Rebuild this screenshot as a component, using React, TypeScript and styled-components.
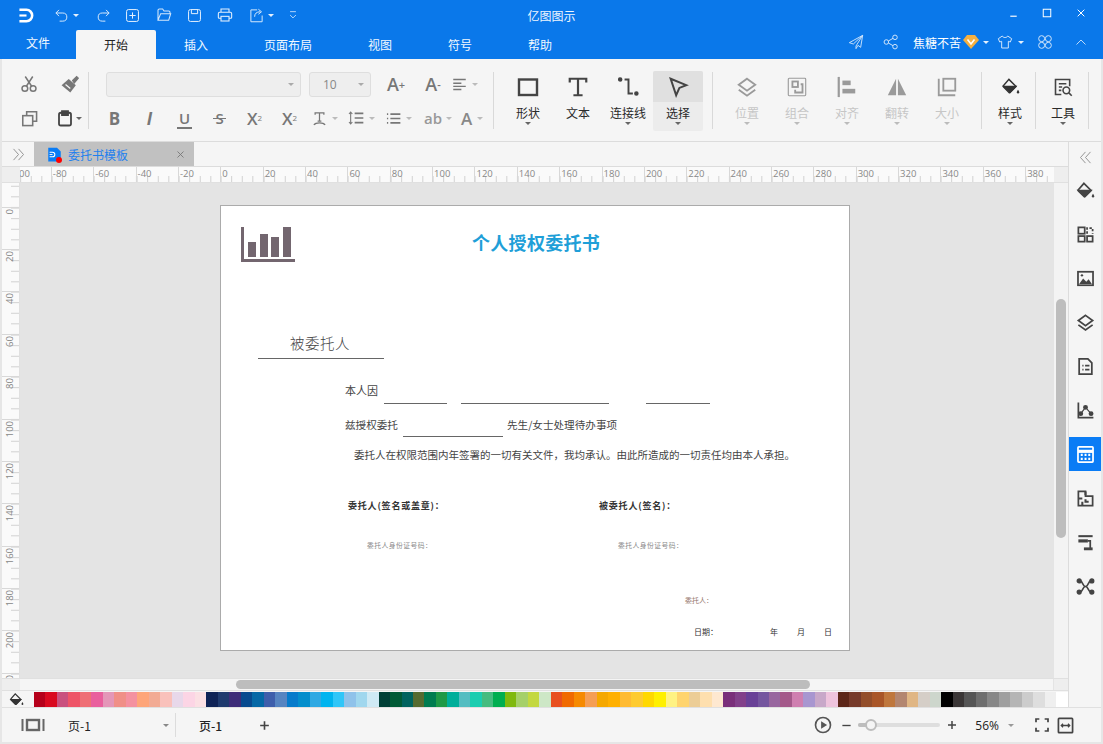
import React from 'react';
import styled, { createGlobalStyle } from 'styled-components';

const Global = createGlobalStyle`
  html, body { margin: 0; padding: 0; background: #e6e6e6; }
  body { font-family: "Noto Sans CJK SC", "Open Sans", sans-serif; overflow: hidden; }
  * { box-sizing: border-box; }
`;

const BLUE = '#0a78ea';
const PALETTE = ['#b5001a','#d9091f','#c9507e','#ee5467','#ef6f75','#e95f9d','#e496b8','#f08f87','#f491a0','#fea579','#f2ab94','#f9c1bb','#e8d8ea','#fcd5e5','#fbe0e4','#0f2356','#1f3a6e','#3d2c78','#074a8f','#0568a6','#3e5eab','#5684c1','#067bcb','#038ecc','#2fa9e3','#00b4ef','#30c6f8','#8fc2ea','#a0d7ee','#cfeaf5','#003f37','#005a36','#00635f','#566b30','#007c50','#1f9946','#00ae9a','#54bdc1','#1bcdb0','#45bc7f','#00ae50','#80b90e','#a5d069','#c3d840','#cde7c6','#e8501f','#f06a00','#f68a00','#f59e54','#f5a800','#ffb000','#ffbb33','#fecb30','#ffd800','#fff000','#fff283','#ffd46e','#eccd96','#fedfae','#fee8d0','#7a2f7a','#82408a','#694197','#75569f','#98669f','#a4598a','#cf7fb0','#a896d0','#c8a8c9','#eec4dd','#5c2618','#763a2a','#934e2a','#a95628','#bf773d','#b38670','#e0b684','#d5cec7','#cdd6cc','#000000','#3a3636','#555555','#6e6e6e','#878787','#9f9f9f','#b5b5b5','#cccccc','#dedede','#efefef','#ffffff'];

const Svg = styled.svg<{ $c: string }>`
  display: block;
  flex-shrink: 0;
  color: ${p => p.$c};
`;

const paths: Record<string, React.ReactNode> = {
  logo: <><path d="M2 4h10a8 8 0 0 1 0 16H2" strokeWidth="3.6" /><path d="M2 12h10" strokeWidth="3" /></>,
  undo: <path d="M8 3L3 8l5 5M3 8h11a6 6 0 0 1 0 13h-5" />,
  redo: <path d="M16 3l5 5-5 5M21 8H10a6 6 0 0 0 0 13h5" />,
  add: <><rect x="2.5" y="2.5" width="19" height="19" rx="3" /><path d="M12 7v10M7 12h10" /></>,
  open: <path d="M3 20V5a2 2 0 0 1 2-2h5l2 3h7a2 2 0 0 1 2 2v2M3 20h16l3-10H7l-4 10z" />,
  save: <><rect x="2.5" y="2.5" width="19" height="19" rx="3" /><path d="M7 3v6h10V3" /></>,
  print: <><path d="M6 8V3h12v5M6 17H3a1.5 1.5 0 0 1-1-1.5V10a2 2 0 0 1 2-2h16a2 2 0 0 1 2 2v5.500a1.500 1.500 0 0 1-1 1.500h-3" /><rect x="6" y="14" width="12" height="7" /></>,
  exportI: <><path d="M13 3H3v19h18V12" /><path d="M9 14c0-5 3-8 9-8M15 2l5 4-5 4" /></>,
  more: <path d="M5 4h14M5 12l7 7 7-7" />,
  minus: <path d="M5 18h14" strokeWidth="3" />,
  square: <rect x="3" y="3" width="18" height="18" strokeWidth="2.400" />,
  bigSquare: <rect x="3" y="4.500" width="18" height="15.500" strokeWidth="2.400" />,
  close: <path d="M4 4l16 16M20 4L4 20" strokeWidth="2.400" />,
  send: <path d="M22 2L2 13l6 2 14-13-10 16v4l3-5 4 3z" />,
  share: <><circle cx="5" cy="12" r="3.400" /><circle cx="18" cy="5" r="3.400" /><circle cx="18" cy="19" r="3.400" /><path d="M8 10.500l7-4M8 13.500l7 4" /></>,
  shirt: <path d="M8 3L2 7l2 5 3-1v10h10V11l3 1 2-5-6-4c-1 3-7 3-8 0z" />,
  apps: <><circle cx="7" cy="7" r="4.500" /><circle cx="17" cy="7" r="4.500" /><circle cx="7" cy="17" r="4.500" /><circle cx="17" cy="17" r="4.500" /></>,
  up: <path d="M3 17L12 8l9 9" />,
  cut: <><circle cx="6.500" cy="18" r="3.800" /><circle cx="17.500" cy="18" r="3.800" /><path d="M8.500 15L17 2M15.500 15L7 2" /></>,
  brush: <><path d="M16 7l5-5 2 2-5 6z" fill="currentColor" /><path d="M11 5l9 8-7 9L2 13z" fill="currentColor" stroke="none" /><path d="M7 12l6 5" stroke="#f5f5f5" /></>,
  copy: <><rect x="2.500" y="8" width="14" height="14" /><path d="M8 8V2.500h14V16h-5.500" /></>,
  paste: <><rect x="4" y="5" width="16" height="17" rx="2.500" /><path d="M8 8V3h8v5z" fill="currentColor" /></>,
  align: <path d="M2 4h20M2 10h13M2 15h20M2 20h13" />,
  lineH: <><path d="M10 5h13M10 12h13M10 19h13" strokeWidth="2.600" /><path d="M4 3v18M1.500 6L4 3l2.500 3M1.500 18L4 21l2.500-3" /></>,
  list: <><path d="M7 5h16M7 12h16M7 19h16" strokeWidth="2.600" /><path d="M1.500 5h2M1.500 12h2M1.500 19h2" strokeWidth="2.600" /></>,
  typo: <><path d="M5 6V3h14v3M12 3v13M9 16h6" /><path d="M3 22c3-4 15-4 18 0" /></>,
  bigT: <path d="M3 7V3h18v4M12 3v18M7 21h10" />,
  conn: <><circle cx="2.500" cy="4" r="1.500" fill="currentColor" /><circle cx="21" cy="20" r="1.500" fill="currentColor" /><path d="M7.500 4H12v16h5" /></>,
  select: <path d="M4 3l17 7-7.500 3L10 21z" />,
  layers: <><path d="M12 3l9 6.500-9 6.500-9-6.500z" /><path d="M3 15l9 6.500 9-6.500" /></>,
  group: <><rect x="2.500" y="2.500" width="19" height="19" rx="1" strokeWidth="1.200" /><rect x="7" y="6" width="6" height="6" /><path d="M16 9h2v9h-8v-3" /></>,
  alignL: <><path d="M3 1v22" strokeWidth="2.400" /><rect x="7" y="5" width="9" height="5" fill="currentColor" stroke="none" /><rect x="7" y="14" width="14" height="5" fill="currentColor" stroke="none" /></>,
  flip: <><path d="M11 3v18H2z" fill="currentColor" stroke="none" /><path d="M13 3v18h9z" fill="currentColor" stroke="none" /></>,
  size: <><path d="M3 3v18h18" /><rect x="8" y="3" width="13" height="13" /></>,
  bucket: <><path d="M10 3l9 9-7.500 7.500a1 1 0 0 1-1.400 0L3 12.400a1 1 0 0 1 0-1.400z" /><path d="M3.500 12h15L11.500 19z" fill="currentColor" /><path d="M21.500 16c1 1.500 1.500 2.400 1.500 3.200a1.500 1.500 0 0 1-3 0c0-.8.500-1.700 1.500-3.200z" fill="currentColor" stroke="none" /></>,
  tools: <><path d="M20 11V3H3v18h7" /><path d="M7 8h9M7 12h4M7 16h3" /><circle cx="16" cy="16" r="4" /><path d="M19 19l3.500 3.500" /></>,
  tiles: <><rect x="3" y="3" width="8" height="8" /><rect x="3" y="14" width="8" height="7" /><rect x="14" y="14" width="7" height="7" /><path d="M14 11V4h7v7" strokeDasharray="3 2" /></>,
  image: <><rect x="2.500" y="3.500" width="19" height="17" /><path d="M4 19l5-7 4 4 3-3 4 6z" fill="currentColor" stroke="none" /><circle cx="7.500" cy="8" r="1.500" fill="currentColor" stroke="none" /></>,
  doc: <><path d="M4 2.500h11l5 5V21.500H4z" /><path d="M8 11h1.500M11.500 11H17M8 16h1.500M11.500 16H17" /></>,
  chart: <><path d="M3 2v19h19" /><path d="M6 16l6-8 7 8" strokeWidth="1.500" /><circle cx="6" cy="16" r="2" fill="currentColor" /><circle cx="12" cy="8" r="2" fill="currentColor" /><circle cx="19" cy="16" r="2" fill="currentColor" /></>,
  calc: <><rect x="2.500" y="2.500" width="19" height="19" rx="1" /><path d="M2.500 8h19" strokeWidth="4" /><path d="M6 12.500h2.500M10.800 12.500h2.500M15.500 12.500h2.500M6 17.500h2.500M10.800 17.500h2.500M15.500 17.500h2.500" strokeWidth="2.600" /></>,
  puzzle: <><path d="M3 3h9v6h9v12H3z" /><path d="M3 12h5M12 3v5M12 13v3h4M8 16v5" strokeWidth="2.600" /></>,
  org: <><path d="M3 4h18" strokeWidth="2.600" /><path d="M3 10h12" strokeWidth="4" /><path d="M15 10h3v9" /><path d="M10 20h11" strokeWidth="3.600" /></>,
  net: <><path d="M5 5c4 0 3 7 7 7s3-7 7-7M5 19c4 0 3-7 7-7s3 7 7 7" /><circle cx="4" cy="5" r="2.200" fill="currentColor" /><circle cx="20" cy="5" r="2.200" fill="currentColor" /><circle cx="4" cy="19" r="2.200" fill="currentColor" /><circle cx="20" cy="19" r="2.200" fill="currentColor" /></>,
  dbl: <path d="M4 3l8 9-8 9M12 3l8 9-8 9" />,
  dblL: <path d="M12 3l-8 9 8 9M20 3l-8 9 8 9" />,
  pageView: <><path d="M1.500 6v12M22.500 6v12" strokeWidth="2" /><rect x="6" y="7" width="12" height="10" strokeWidth="2.400" /></>,
  plus: <path d="M12 4v16M4 12h16" strokeWidth="3" />,
  dash: <path d="M3 12h18" strokeWidth="3" />,
  play: <><circle cx="12" cy="12" r="10" /><path d="M9.500 7l8 5-8 5z" fill="currentColor" stroke="none" /></>,
  full: <path d="M3 8V3h5M16 3h5v5M21 16v5h-5M8 21H3v-5" strokeWidth="2.600" />,
  fit: <><rect x="2" y="2" width="20" height="20" rx="1" /><path d="M6 12h12M8.500 9.500L6 12l2.500 2.500M15.500 9.500L18 12l-2.500 2.500" strokeWidth="1.800" /></>,
  docTab: <path d="M2 1h14l6 6v16H2z" fill="currentColor" stroke="none" />,
};

function Icon({ n, s = 16, c = 'currentColor', w = 2 }: { n: string; s?: number; c?: string; w?: number }) {
  return (
    <Svg $c={c} width={s} height={s} viewBox="0 0 24 24" fill="none" stroke="currentColor" strokeWidth={w} strokeLinejoin="miter">
      {paths[n]}
    </Svg>
  );
}

const App0 = styled.div`
  width: 1103px;
  height: 744px;
  display: flex;
  flex-direction: column;
  overflow: hidden;
  background: #e6e6e6;
`;
const TitleBar = styled.div`
  height: 30px;
  background: ${BLUE};
  display: grid;
  grid-template-columns: 1fr auto 1fr;
  align-items: center;
  color: #fff;
`;
const Quick = styled.div`
  display: flex;
  align-items: center;
`;
const Slot = styled.span<{ $l?: number }>`
  display: inline-flex;
  align-items: center;
  flex-shrink: 0;
  margin-left: ${p => p.$l ?? 0}px;
`;
const AppTitle = styled.div`
  font-size: 12px;
  color: #eef6ff;
  padding-top: 1px;
`;
const WinBtns = styled.div`
  display: flex;
  justify-content: flex-end;
  padding: 0 5px 4px 0;
`;
const WinBtn = styled.span`
  width: 34px;
  height: 26px;
  display: flex;
  align-items: center;
  justify-content: center;
`;
const Caret = styled.span<{ $c?: string; $m?: number }>`
  display: inline-block;
  flex-shrink: 0;
  width: 0;
  height: 0;
  margin-left: ${p => p.$m ?? 0}px;
  border-left: 3px solid transparent;
  border-right: 3px solid transparent;
  border-top: 3px solid ${p => p.$c ?? '#bbb'};
`;
const MenuBar = styled.div`
  height: 29px;
  background: ${BLUE};
  display: flex;
  justify-content: space-between;
  align-items: flex-end;
  color: #fff;
`;
const Tabs = styled.div`
  display: flex;
  height: 100%;
`;
const MenuTab = styled.div<{ $active?: boolean; $first?: boolean }>`
  height: 29px;
  align-self: flex-end;
  padding: ${p => (p.$first ? '0 26px 4px' : '0 28px 1px')};
  display: flex;
  align-items: center;
  font-size: 12px;
  border-radius: 2px 2px 0 0;
  color: ${p => (p.$active ? '#222' : '#f2f8ff')};
  background: ${p => (p.$active ? '#f5f5f5' : 'transparent')};
`;
const MenuRight = styled.div`
  display: flex;
  align-items: center;
  height: 28px;
  padding-right: 16px;
  padding-bottom: 6px;
`;
const UserName = styled.span`
  font-size: 12px;
  color: #fff;
`;
const Shell = styled.div`
  flex: 1;
  min-height: 0;
  display: flex;
  flex-direction: column;
  padding: 0 2px 2px;
`;
const Ribbon = styled.div`
  height: 83px;
  background: #f5f5f5;
  border-bottom: 1px solid #dcdcdc;
  display: flex;
  align-items: flex-start;
  padding-top: 8px;
`;
const ClipGrid = styled.div`
  display: grid;
  grid-template-columns: 40px 40px;
  grid-auto-rows: 34px;
  padding-left: 7px;
  width: 86px;
`;
const Cell = styled.div<{ $w?: number; $start?: boolean }>`
  display: flex;
  align-items: center;
  justify-content: ${p => (p.$start ? 'flex-start' : 'center')};
  height: 34px;
  ${p => (p.$w ? `width: ${p.$w}px; flex-shrink: 0;` : '')}
`;
const RSep = styled.div<{ $l?: number; $r?: number }>`
  width: 1px;
  height: 57px;
  margin: 5px ${p => p.$r ?? 0}px 0 ${p => p.$l ?? 0}px;
  background: #d9d9d9;
  flex-shrink: 0;
`;
const FontGroup = styled.div`
  width: 404px;
  display: flex;
  flex-direction: column;
`;
const FontRow = styled.div<{ $pad: number }>`
  display: flex;
  align-items: center;
  height: 34px;
  padding-left: ${p => p.$pad}px;
`;
const Select = styled.div<{ $w: number }>`
  width: ${p => p.$w}px;
  height: 25px;
  margin-right: 8px;
  background: #eeeeee;
  border: 1px solid #dedede;
  border-radius: 3px;
  display: flex;
  align-items: center;
  justify-content: space-between;
  padding: 0 6px 0 13px;
  font-family: "Open Sans", sans-serif;
  font-size: 12px;
  color: #888;
  flex-shrink: 0;
`;
const Glyph = styled.span<{ $s?: number; $it?: boolean; $b?: boolean; $c?: string; $mark?: 'under' | 'strike' }>`
  position: relative;
  font-family: "Open Sans", "Liberation Sans", sans-serif;
  font-size: ${p => p.$s ?? 17}px;
  font-weight: ${p => (p.$b ? 700 : 600)};
  font-style: ${p => (p.$it ? 'italic' : 'normal')};
  color: ${p => p.$c ?? '#777'};
  line-height: 1;
  ${p =>
    p.$mark
      ? `&::after {
          content: '';
          position: absolute;
          left: -2px;
          right: -2px;
          height: 1.5px;
          background: #777;
          ${p.$mark === 'under' ? 'bottom: -3px;' : 'top: 7px;'}
        }`
      : ''}
`;
const Mini = styled.sup<{ $down?: boolean }>`
  font-family: "Open Sans", sans-serif;
  font-size: 8px;
  line-height: 1;
  color: #777;
  vertical-align: ${p => (p.$down ? '-2px' : '7px')};
`;
const Sign = styled.sup`
  font-family: "Open Sans", sans-serif;
  font-size: 11px;
  font-weight: 600;
  line-height: 1;
  color: #777;
  vertical-align: 6px;
`;
const BigBtn = styled.div<{ $w?: number; $active?: boolean }>`
  width: ${p => p.$w ?? 50}px;
  flex-shrink: 0;
  height: 60px;
  margin-top: 4px;
  display: flex;
  flex-direction: column;
  align-items: center;
  border-radius: 2px;
  background: ${p => (p.$active ? '#ececec' : 'transparent')};
`;
const BigIcon = styled.div<{ $active?: boolean }>`
  width: 100%;
  height: 31px;
  display: flex;
  align-items: center;
  justify-content: center;
  border-radius: 2px 2px 0 0;
  background: ${p => (p.$active ? '#e0e0e0' : 'transparent')};
`;
const BigLabel = styled.div<{ $off?: boolean }>`
  font-size: 12px;
  line-height: 18px;
  margin-top: 2px;
  color: ${p => (p.$off ? '#c6c6c6' : '#2a2a2a')};
  white-space: nowrap;
`;
const Work = styled.div`
  flex: 1;
  min-height: 0;
  display: flex;
`;
const Main = styled.div`
  flex: 1;
  min-width: 0;
  display: flex;
  flex-direction: column;
`;
const TabStrip = styled.div`
  height: 25px;
  background: #f5f5f5;
  border-bottom: 1px solid #dcdcdc;
  display: flex;
  flex-shrink: 0;
`;
const Expand = styled.div`
  width: 32px;
  display: flex;
  align-items: center;
  justify-content: center;
  color: #888;
`;
const DocTab = styled.div`
  width: 160px;
  height: 24px;
  background: #c1c1c1;
  display: flex;
  align-items: center;
  padding-left: 13px;
  color: #888;
`;
const DocIcon = styled.span`
  position: relative;
  display: inline-flex;
  width: 13px;
  color: #0a7cf5;
`;
const DocMark = styled.span`
  position: absolute;
  left: 2px;
  top: 4px;
  width: 7px;
  height: 7px;
  color: #fff;
`;
const RedDot = styled.span`
  position: absolute;
  right: -2px;
  bottom: -1px;
  width: 6px;
  height: 6px;
  border-radius: 50%;
  background: #f00;
`;
const DocName = styled.span`
  flex: 1;
  margin-left: 8px;
  font-size: 12px;
  color: #1f80ee;
`;
const TabClose = styled.span`
  margin-right: 9px;
  display: flex;
`;
const RulerRow = styled.div`
  height: 16px;
  display: flex;
  flex-shrink: 0;
  background: #f0f0f0;
  border-bottom: 1px solid #e0e0e0;
`;
const Corner = styled.div<{ $w: number }>`
  width: ${p => p.$w}px;
  background: #eeeeee;
  flex-shrink: 0;
`;
const HRuler = styled.div`
  flex: 1;
  min-width: 0;
  overflow: hidden;
  display: flex;
  background: #fafafa;
`;
const HMajor = styled.div<{ $first?: boolean }>`
  flex: 0 0 42.37px;
  ${p => (p.$first ? 'margin-left: -11.5px;' : '')}
  border-left: 1px solid #d8d8d8;
  padding-left: 1px;
  font-family: "Open Sans", sans-serif;
  font-size: 9.5px;
  line-height: 14px;
  color: #888;
  background: linear-gradient(to right, #d0d0d0 1px, transparent 1px) -0.4px bottom / 10.59px 6px repeat-x;
`;
const CanvasRow = styled.div`
  flex: 1;
  min-height: 0;
  display: flex;
`;
const VRuler = styled.div`
  width: 18px;
  flex-shrink: 0;
  overflow: hidden;
  display: flex;
  flex-direction: column;
  background: #fafafa;
  border-right: 1px solid #e0e0e0;
`;
const VMajor = styled.div<{ $first?: boolean }>`
  flex: 0 0 42.37px;
  ${p => (p.$first ? 'margin-top: -18.67px;' : '')}
  border-top: 1px solid #d8d8d8;
  padding: 1px 0 0 2px;
  background: linear-gradient(to bottom, #d0d0d0 1px, transparent 1px) right -0.4px / 8px 10.59px repeat-y;
`;
const VText = styled.span`
  display: block;
  writing-mode: vertical-rl;
  transform: rotate(180deg);
  font-family: "Open Sans", sans-serif;
  font-size: 9.5px;
  line-height: 11px;
  color: #888;
`;
const Canvas = styled.div`
  flex: 1;
  min-width: 0;
  background: #e4e4e4;
  padding: 22px 0 0 200px;
  overflow: hidden;
`;
const Page = styled.div`
  position: relative;
  width: 630px;
  height: 446px;
  background: #fff;
  border: 1px solid #ababab;
`;
const Txt = styled.span<{ $x: number; $y: number; $s: number; $c?: string; $b?: number; $ls?: number }>`
  position: absolute;
  left: ${p => p.$x - 221}px;
  top: ${p => p.$y - 206}px;
  font-size: ${p => p.$s}px;
  font-weight: ${p => p.$b ?? 400};
  color: ${p => p.$c ?? '#444'};
  letter-spacing: ${p => p.$ls ?? 0}px;
  line-height: 1;
  white-space: nowrap;
`;
const Rule = styled.span<{ $x: number; $y: number; $w: number }>`
  position: absolute;
  left: ${p => p.$x - 221}px;
  top: ${p => p.$y - 206}px;
  width: ${p => p.$w}px;
  height: 1px;
  background: #666;
`;
const ChartMark = styled.svg`
  position: absolute;
  left: 20px;
  top: 21px;
`;
const VScroll = styled.div`
  width: 14px;
  flex-shrink: 0;
  background: #f3f3f3;
  padding: 116px 1px 0 2px;
`;
const VThumb = styled.div`
  width: 10px;
  height: 239px;
  border-radius: 5px;
  background: #bdbdbd;
`;
const HScrollRow = styled.div`
  height: 12px;
  flex-shrink: 0;
  display: flex;
  background: #eeeeee;
  border-top: 1px solid #e0e0e0;
`;
const HTrack = styled.div`
  flex: 1;
  background: #f5f5f5;
  padding: 1px 0 0 216px;
  border-right: 1px solid #e4e4e4;
`;
const HThumb = styled.div`
  width: 574px;
  height: 9px;
  border-radius: 5px;
  background: #bdbdbd;
`;
const PaletteRow = styled.div`
  height: 17px;
  flex-shrink: 0;
  display: flex;
  background: #f5f5f5;
  border-top: 1px solid #e0e0e0;
  padding-top: 1px;
`;
const PaletteIcon = styled.div`
  width: 32px;
  display: flex;
  align-items: center;
  justify-content: center;
  padding-right: 4px;
  flex-shrink: 0;
`;
const Swatch = styled.span<{ $c: string }>`
  flex: 1;
  height: 15px;
  background: ${p => p.$c};
`;
const Side = styled.div`
  width: 33px;
  flex-shrink: 0;
  background: #f5f5f5;
  border-left: 1px solid #dcdcdc;
  display: flex;
  flex-direction: column;
  align-items: stretch;
`;
const SideTop = styled.div`
  height: 31px;
  display: flex;
  align-items: center;
  justify-content: center;
  color: #888;
`;
const SideBtn = styled.div<{ $active?: boolean }>`
  height: 34px;
  margin-bottom: 10px;
  display: flex;
  align-items: center;
  justify-content: center;
  background: ${p => (p.$active ? '#0a7cf5' : 'transparent')};
  color: ${p => (p.$active ? '#fff' : '#444')};
`;
const Status = styled.div`
  height: 35px;
  flex-shrink: 0;
  background: #f5f5f5;
  border-top: 1px solid #e0e0e0;
  display: flex;
  align-items: center;
`;
const StatusText = styled.span<{ $b?: boolean; $w?: number }>`
  font-size: 12px;
  font-weight: ${p => (p.$b ? 500 : 400)};
  color: #222;
  ${p => (p.$w ? `width: ${p.$w}px;` : '')}
  flex-shrink: 0;
`;
const SSep = styled.span`
  width: 1px;
  height: 24px;
  background: #dcdcdc;
  flex-shrink: 0;
  margin: 0 23px 0 6px;
`;
const Track = styled.div`
  position: relative;
  width: 82px;
  height: 4px;
  border-radius: 2px;
  background: #dedede;
  margin-left: 6px;
  flex-shrink: 0;
`;
const Filled = styled.div`
  width: 14px;
  height: 4px;
  border-radius: 2px;
  background: #bdbdbd;
`;
const Thumb = styled.span`
  position: absolute;
  left: 7px;
  top: -4px;
  width: 12px;
  height: 12px;
  border-radius: 50%;
  background: #f5f5f5;
  border: 2px solid #bdbdbd;
`;
const Spacer = styled.div`
  flex: 1;
`;
const Zoom = styled.span`
  font-family: "Open Sans", sans-serif;
  font-size: 12px;
  color: #222;
  margin-left: 17px;
`;

const big = [
  { n: 'bigSquare', l: '形状', s: 24, c: '#444', w: 2.4, caret: true },
  { n: 'bigT', l: '文本', s: 22, c: '#444', w: 2.4 },
  { n: 'conn', l: '连接线', s: 21, c: '#444', w: 2.2, caret: true },
  { n: 'select', l: '选择', s: 22, c: '#444', w: 2.2, caret: true, active: true },
];
const off = [
  { n: 'layers', l: '位置' },
  { n: 'group', l: '组合' },
  { n: 'alignL', l: '对齐' },
  { n: 'flip', l: '翻转' },
  { n: 'size', l: '大小' },
];
const side = ['bucket', 'tiles', 'image', 'layers', 'doc', 'chart', 'calc', 'puzzle', 'org', 'net'];
const hLabels = Array.from({ length: 25 }, (_, i) => -100 + i * 20);
const vLabels = Array.from({ length: 13 }, (_, i) => -20 + i * 20);

export default function App() {
  return (
    <App0>
      <Global />
      <TitleBar>
        <Quick>
          <Slot $l={18}><Icon n="logo" s={17} c="#fff" /></Slot>
          <Slot $l={19}><Icon n="undo" s={15} c="#d5e8fc" w={1.6} /></Slot>
          <Caret $m={4} $c="#e4f0fd" />
          <Slot $l={17}><Icon n="redo" s={15} c="#d5e8fc" w={1.6} /></Slot>
          <Slot $l={14}><Icon n="add" s={15} c="#e4f0fd" w={1.6} /></Slot>
          <Slot $l={16}><Icon n="open" s={16} c="#d5e8fc" w={1.6} /></Slot>
          <Slot $l={15}><Icon n="save" s={15} c="#e4f0fd" w={1.6} /></Slot>
          <Slot $l={15}><Icon n="print" s={16} c="#e4f0fd" w={1.6} /></Slot>
          <Slot $l={16}><Icon n="exportI" s={15} c="#d5e8fc" w={1.6} /></Slot>
          <Caret $m={4} $c="#e4f0fd" />
          <Slot $l={14}><Icon n="more" s={10} c="#d5e8fc" w={2} /></Slot>
        </Quick>
        <AppTitle>亿图图示</AppTitle>
        <WinBtns>
          <WinBtn><Icon n="minus" s={11} c="#dcecfd" /></WinBtn>
          <WinBtn><Icon n="square" s={10} c="#fff" /></WinBtn>
          <WinBtn><Icon n="close" s={10} c="#fff" /></WinBtn>
        </WinBtns>
      </TitleBar>
      <MenuBar>
        <Tabs>
          <MenuTab $first>文件</MenuTab>
          <MenuTab $active>开始</MenuTab>
          <MenuTab>插入</MenuTab>
          <MenuTab>页面布局</MenuTab>
          <MenuTab>视图</MenuTab>
          <MenuTab>符号</MenuTab>
          <MenuTab>帮助</MenuTab>
        </Tabs>
        <MenuRight>
          <Icon n="send" s={16} c="#cfe4fb" w={1.4} />
          <Slot $l={19}><Icon n="share" s={16} c="#cfe4fb" w={1.5} /></Slot>
          <Slot $l={14}><UserName>焦糖不苦</UserName></Slot>
          <Slot $l={2}>
            <svg width="16" height="14" viewBox="0 0 16 14">
              <path d="M4 0h8l4 5-8 9-8-9z" fill="#f5b041" />
              <path d="M4.500 4.500L8 9l3.500-4.500" fill="none" stroke="#fff" strokeWidth="1.600" />
            </svg>
          </Slot>
          <Caret $m={4} $c="#e4f0fd" />
          <Slot $l={8}><Icon n="shirt" s={16} c="#cfe4fb" w={1.5} /></Slot>
          <Caret $m={5} $c="#e4f0fd" />
          <Slot $l={13}><Icon n="apps" s={16} c="#cfe4fb" w={1.5} /></Slot>
          <Slot $l={22}><Icon n="up" s={12} c="#cfe4fb" w={1.8} /></Slot>
        </MenuRight>
      </MenuBar>
      <Shell>
        <Ribbon>
          <ClipGrid>
            <Cell><Icon n="cut" s={18} c="#777" w={2} /></Cell>
            <Cell><Icon n="brush" s={19} c="#777" w={1.6} /></Cell>
            <Cell><Icon n="copy" s={17} c="#777" w={2.2} /></Cell>
            <Cell>
              <Icon n="paste" s={18} c="#444" w={2.4} />
              <Caret $m={2} $c="#666" />
            </Cell>
          </ClipGrid>
          <RSep />
          <FontGroup>
            <FontRow $pad={17}>
              <Select $w={195}><span /><Caret $c="#aaa" /></Select>
              <Select $w={62}><span>10</span><Caret $c="#aaa" /></Select>
              <Cell $w={34}><Glyph $s={18}>A</Glyph><Sign>+</Sign></Cell>
              <Slot $l={3}><Cell $w={34}><Glyph $s={18}>A</Glyph><Sign>-</Sign></Cell></Slot>
              <Slot $l={2}><Icon n="align" s={15} c="#777" w={2.2} /></Slot>
              <Caret $m={5} $c="#bbb" />
            </FontRow>
            <FontRow $pad={8}>
              <Cell $w={35}><Glyph $s={17} $b>B</Glyph></Cell>
              <Cell $w={35}><Glyph $s={17} $it $b>I</Glyph></Cell>
              <Cell $w={35}><Glyph $s={15} $mark="under">U</Glyph></Cell>
              <Cell $w={35}><Glyph $s={15} $mark="strike">S</Glyph></Cell>
              <Cell $w={35}><Glyph $s={17}>X</Glyph><Mini>2</Mini></Cell>
              <Cell $w={35}><Glyph $s={17}>X</Glyph><Mini $down>2</Mini></Cell>
              <Slot $l={5}><Cell $w={36} $start><Icon n="typo" s={15} c="#777" w={2} /><Caret $m={5} /></Cell></Slot>
              <Cell $w={38} $start><Icon n="lineH" s={16} c="#777" w={1.6} /><Caret $m={5} /></Cell>
              <Cell $w={38} $start><Icon n="list" s={15} c="#777" w={2} /><Caret $m={5} /></Cell>
              <Cell $w={37} $start><Glyph $s={15} $c="#999">ab</Glyph><Caret $m={4} /></Cell>
              <Cell $w={30} $start><Glyph $s={17} $c="#888">A</Glyph><Caret $m={5} /></Cell>
            </FontRow>
          </FontGroup>
          <RSep $r={9} />
          {big.map(b => (
            <BigBtn key={b.l} $active={b.active} $w={50}>
              <BigIcon $active={b.active}><Icon n={b.n} s={b.s} c={b.c} w={b.w} /></BigIcon>
              <BigLabel>{b.l}</BigLabel>
              {b.caret && <Caret $c="#666" />}
            </BigBtn>
          ))}
          <RSep $l={9} $r={9} />
          {off.map(b => (
            <BigBtn key={b.l}>
              <BigIcon><Icon n={b.n} s={22} c="#9a9a9a" w={2} /></BigIcon>
              <BigLabel $off>{b.l}</BigLabel>
              <Caret $c="#bbb" />
            </BigBtn>
          ))}
          <RSep $l={9} $r={3} />
          <BigBtn>
            <BigIcon><Icon n="bucket" s={19} c="#333" w={1.8} /></BigIcon>
            <BigLabel>样式</BigLabel>
            <Caret $c="#666" />
          </BigBtn>
          <RSep $r={2} />
          <BigBtn>
            <BigIcon><Icon n="tools" s={20} c="#444" w={1.9} /></BigIcon>
            <BigLabel>工具</BigLabel>
            <Caret $c="#666" />
          </BigBtn>
          <RSep />
        </Ribbon>
        <Work>
          <Main>
            <TabStrip>
              <Expand><Icon n="dbl" s={15} c="#888" w={1.4} /></Expand>
              <DocTab>
                <DocIcon>
                  <Icon n="docTab" s={15} c="#0a7cf5" />
                  <DocMark><Icon n="logo" s={7} c="#fff" /></DocMark>
                  <RedDot />
                </DocIcon>
                <DocName>委托书模板</DocName>
                <TabClose><Icon n="close" s={9} c="#777" w={2} /></TabClose>
              </DocTab>
            </TabStrip>
            <RulerRow>
              <Corner $w={18} />
              <HRuler>
                {hLabels.map((v, i) => (
                  <HMajor key={v} $first={i === 0}>{v}</HMajor>
                ))}
              </HRuler>
              <Corner $w={14} />
            </RulerRow>
            <CanvasRow>
              <VRuler>
                {vLabels.map((v, i) => (
                  <VMajor key={v} $first={i === 0}>{i > 0 && <VText>{v}</VText>}</VMajor>
                ))}
              </VRuler>
              <Canvas>
                <Page>
                  <ChartMark width="54" height="35" viewBox="0 0 54 35">
                    <path d="M0 0h3v32h51v3H0z" fill="#73666f" />
                    <path d="M7 15h8v15H7zM19 7h8v23h-8zM30 10h8v20h-8zM42 0h8v30h-8z" fill="#73666f" />
                  </ChartMark>
                  <Txt $x={472} $y={233} $s={18} $b={700} $c="#1f9fd8" $ls={0.3}>个人授权委托书</Txt>
                  <Txt $x={290} $y={336} $s={14.5} $b={300} $c="#444" $ls={0.5}>被委托人</Txt>
                  <Rule $x={258} $y={358} $w={126} />
                  <Txt $x={345} $y={385} $s={11}>本人因</Txt>
                  <Rule $x={384} $y={403} $w={63} />
                  <Rule $x={461} $y={403} $w={148} />
                  <Rule $x={646} $y={403} $w={64} />
                  <Txt $x={345} $y={420} $s={10.6}>兹授权委托</Txt>
                  <Rule $x={403} $y={436} $w={100} />
                  <Txt $x={507} $y={420} $s={10.6}>先生/女士处理待办事项</Txt>
                  <Txt $x={354} $y={450} $s={10.5}>委托人在权限范围内年签署的一切有关文件，我均承认。由此所造成的一切责任均由本人承担。</Txt>
                  <Txt $x={348} $y={501} $s={9} $b={700} $c="#333" $ls={0.8}>委托人(签名或盖章)：</Txt>
                  <Txt $x={599} $y={501} $s={9} $b={700} $c="#333" $ls={0.8}>被委托人(签名)：</Txt>
                  <Txt $x={367} $y={542} $s={6.800} $c="#8a8a8a" $ls={0.45}>委托人身份证号码：</Txt>
                  <Txt $x={618} $y={542} $s={6.800} $c="#8a8a8a" $ls={0.45}>委托人身份证号码：</Txt>
                  <Txt $x={685} $y={597} $s={7} $c="#96786e">委托人：</Txt>
                  <Txt $x={694} $y={628} $s={8} $c="#333">日期：</Txt>
                  <Txt $x={770} $y={628} $s={8} $c="#333">年</Txt>
                  <Txt $x={797} $y={628} $s={8} $c="#333">月</Txt>
                  <Txt $x={824} $y={628} $s={8} $c="#333">日</Txt>
                </Page>
              </Canvas>
              <VScroll><VThumb /></VScroll>
            </CanvasRow>
            <HScrollRow>
              <Corner $w={18} />
              <HTrack><HThumb /></HTrack>
              <Corner $w={14} />
            </HScrollRow>
            <PaletteRow>
              <PaletteIcon><Icon n="bucket" s={15} c="#333" w={2} /></PaletteIcon>
              {PALETTE.map((c, i) => <Swatch key={i} $c={c} />)}
            </PaletteRow>
          </Main>
          <Side>
            <SideTop><Icon n="dblL" s={15} c="#888" w={1.4} /></SideTop>
            {side.map(n => (
              <SideBtn key={n} $active={n === 'calc'}>
                <Icon n={n} s={19} c="currentColor" w={2.2} />
              </SideBtn>
            ))}
          </Side>
        </Work>
        <Status>
          <Slot $l={19}><Icon n="pageView" s={24} c="#666" w={2} /></Slot>
          <Slot $l={23}><StatusText $w={95}>页-1</StatusText></Slot>
          <Caret $c="#888" />
          <SSep />
          <StatusText $b>页-1</StatusText>
          <Slot $l={36}><Icon n="plus" s={13} c="#444" /></Slot>
          <Spacer />
          <Icon n="play" s={18} c="#555" w={2.2} />
          <Slot $l={9}><Icon n="dash" s={11} c="#444" /></Slot>
          <Track><Filled /><Thumb /></Track>
          <Slot $l={6}><Icon n="plus" s={12} c="#444" /></Slot>
          <Zoom>56%</Zoom>
          <Caret $m={9} $c="#999" />
          <Slot $l={20}><Icon n="full" s={16} c="#444" w={2.4} /></Slot>
          <Slot $l={7}><Icon n="fit" s={17} c="#444" w={2.4} /></Slot>
          <Slot $l={27} />
        </Status>
      </Shell>
    </App0>
  );
}
